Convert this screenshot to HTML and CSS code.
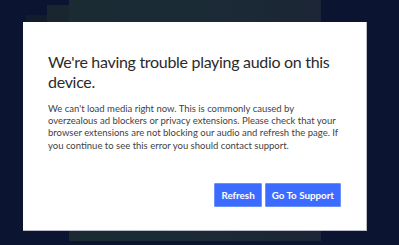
FILE: index.html
```html
<!DOCTYPE html>
<html lang="en">
<head>
    <meta charset="UTF-8">
    <meta name="viewport" content="width=device-width, initial-scale=1.0">
    <title>Playback Error</title>
    <link rel="stylesheet" href="styles.css">
</head>
<body>
    <div class="backdrop">
        <div class="glow glow-a"></div>
        <div class="glow glow-b"></div>
        <div class="panel"></div>
    </div>

    <div class="overlay">
        <div class="modal">
            <h1>We're having trouble playing audio on this device.</h1>
            <p>We can't load media right now. This is commonly caused by<br>
                overzealous ad blockers or privacy extensions. Please check that your<br>
                browser extensions are not blocking our audio and refresh the page. If<br>
                you continue to see this error you should contact support.</p>
            <div class="actions">
                <button class="btn">Refresh</button>
                <button class="btn">Go To Support</button>
            </div>
        </div>
    </div>
</body>
</html>
```

FILE: styles.css
```css
* {
    margin: 0;
    padding: 0;
    box-sizing: border-box;
}

body {
    font-family: Lato, "Noto Sans", sans-serif;
    background: #0b1430;
    width: 399px;
    height: 245px;
    overflow: hidden;
    position: relative;
}

/* blurred player art behind the dialog */
.backdrop {
    position: absolute;
    inset: 0;
}

.panel {
    position: absolute;
    left: 69px;
    top: 0;
    width: 252px;
    height: 241px;
    background: linear-gradient(90deg, #1a2b33 0%, #1b2a36 60%, #1c2535 100%);
}

.glow-a {
    position: absolute;
    left: 47px;
    top: 5px;
    width: 22px;
    height: 60px;
    background: #192630;
}

.glow-b {
    position: absolute;
    left: 26px;
    top: 15px;
    width: 21px;
    height: 50px;
    background: #111d2c;
}

.overlay {
    position: absolute;
    inset: 0;
    padding: 22px 32px 14px 23px;
}

.modal {
    background: #fff;
    width: 344px;
    height: 209px;
    border-right: 1px solid #b9bdc8;
    border-bottom: 1px solid #b9bdc8;
    padding: 30px 25px 23px 25px;
    display: flex;
    flex-direction: column;
}

.modal h1 {
    font-size: 16px;
    font-weight: 400;
    line-height: 20px;
    letter-spacing: -0.3px;
    color: #2b2b2b;
    margin-bottom: 11px;
}

.modal p {
    font-size: 9.5px;
    line-height: 12.2px;
    color: #3f3f3f;
    white-space: nowrap;
}

.actions {
    margin-top: auto;
    display: flex;
    justify-content: flex-end;
    gap: 3px;
}

.btn {
    background: #3c6cff;
    color: #fff;
    border: 1px solid #6d90ff;
    border-radius: 1px;
    font-family: inherit;
    font-size: 9.8px;
    font-weight: 700;
    height: 24px;
    padding: 0 6px;
}
```
